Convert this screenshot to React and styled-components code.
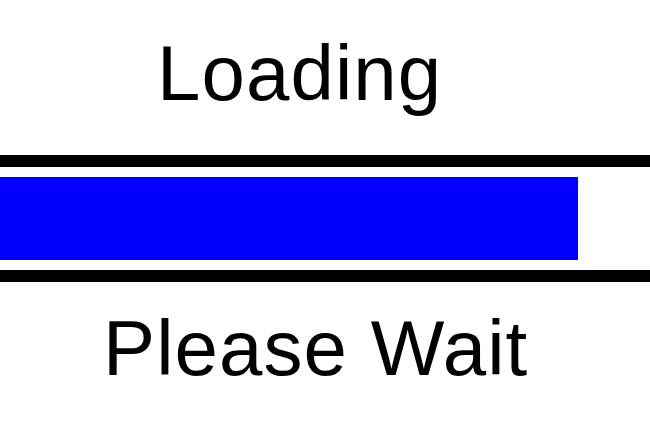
import React from 'react'
import styled, { createGlobalStyle } from 'styled-components'

const GlobalStyle = createGlobalStyle`
  html, body {
    margin: 0;
    padding: 0;
    background: #ffffff;
    overflow: hidden;
  }
`

const Screen = styled.div`
  width: 650px;
  height: 433px;
  display: flex;
  flex-direction: column;
  font-family: "Liberation Sans", Arial, sans-serif;
  color: #000000;
`

const Caption = styled.div`
  font-size: 78px;
  line-height: 78px;
  letter-spacing: 1.1px;
  padding-left: ${p => p.$indent}px;
  margin-top: ${p => p.$top}px;
  white-space: nowrap;
`

const Track = styled.div`
  border-top: 12px solid #000000;
  border-bottom: 12px solid #000000;
  padding: 10px 0;
  margin-top: 43px;
`

const Fill = styled.div`
  height: 83px;
  background: #0000ff;
`

export default function App() {
  const progress = 578
  return (
    <>
      <GlobalStyle />
      <Screen>
        <Caption $indent={157} $top={34}>Loading</Caption>
        <Track>
          <Fill style={{ width: progress }} />
        </Track>
        <Caption $indent={103} $top={27}>Please Wait</Caption>
      </Screen>
    </>
  )
}
